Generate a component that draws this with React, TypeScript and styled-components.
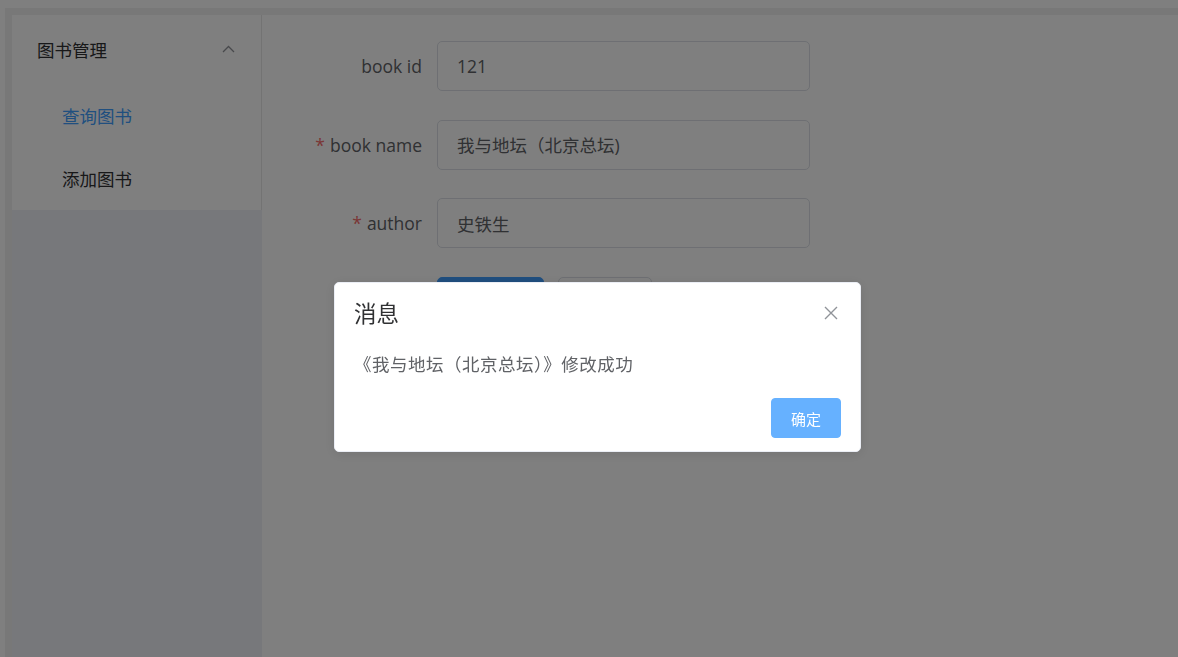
import styled, { createGlobalStyle } from "styled-components";

const GlobalStyle = createGlobalStyle`
  * {
    box-sizing: border-box;
  }

  html, body {
    margin: 0;
    padding: 0;
    background: #ffffff;
    font-family: "Open Sans", "Noto Sans CJK SC", sans-serif;
    overflow: hidden;
  }
`;

const Frame = styled.div`
  margin: 8px 0 0 5px;
  height: 649px;
  border-top: 7px solid #f0f0f0;
  border-left: 7px solid #f0f0f0;
  display: flex;
`;

const Aside = styled.aside`
  width: 250px;
  flex-shrink: 0;
  background: rgb(238, 241, 246);
`;

const Menu = styled.ul<{ $nested?: boolean }>`
  list-style: none;
  margin: 0;
  padding: 0;
  background: #ffffff;
  border-right: ${(p) => (p.$nested ? "none" : "1px solid #e6e6e6")};
`;

const SubTitle = styled.div`
  height: 69px;
  padding: 0 25px;
  display: flex;
  align-items: center;
  justify-content: space-between;
  font-size: 17.5px;
  color: #303133;
`;

const MenuItem = styled.li<{ $active?: boolean }>`
  height: 63px;
  padding-left: 50px;
  display: flex;
  align-items: center;
  font-size: 17.5px;
  color: ${(p) => (p.$active ? "#409eff" : "#303133")};
`;

const Main = styled.main`
  flex: 1;
  padding: 26px 25px;
`;

const FormItem = styled.div`
  display: flex;
  height: 50px;
  margin-bottom: 28.5px;
`;

const Label = styled.label`
  width: 150px;
  padding-right: 15px;
  text-align: right;
  line-height: 50px;
  font-size: 17.5px;
  color: #606266;
`;

const Star = styled.span`
  color: #f56c6c;
  margin-right: 5px;
`;

const Input = styled.div`
  width: 373px;
  height: 50px;
  border: 1px solid #dcdfe6;
  border-radius: 5px;
  padding: 0 19px;
  display: flex;
  align-items: center;
  font-size: 17.5px;
  color: #606266;
`;

const Actions = styled.div`
  display: flex;
  gap: 14px;
  padding-left: 150px;
  margin-top: 1px;
`;

const Button = styled.button<{ $primary?: boolean }>`
  height: 50px;
  padding: 0 23.5px;
  border-radius: 5px;
  font-family: inherit;
  font-size: 17.5px;
  border: 1px solid ${(p) => (p.$primary ? "#409eff" : "#dcdfe6")};
  background: ${(p) => (p.$primary ? "#409eff" : "#ffffff")};
  color: ${(p) => (p.$primary ? "#ffffff" : "#606266")};
`;

const Overlay = styled.div`
  position: fixed;
  inset: 0;
  background: rgba(0, 0, 0, 0.5);
  display: flex;
  align-items: flex-start;
`;

const Dialog = styled.div`
  position: relative;
  margin: 282px 0 0 334px;
  width: 527px;
  padding-bottom: 13px;
  background: #ffffff;
  border: 1px solid #ebeef5;
  border-radius: 5px;
  box-shadow: 0 2px 12px rgba(0, 0, 0, 0.1);
`;

const DialogHeader = styled.div`
  padding: 20px 19px 12.5px;
`;

const DialogTitle = styled.div`
  font-size: 22.5px;
  line-height: 1;
  color: #303133;
`;

const CloseButton = styled.div`
  position: absolute;
  top: 20px;
  right: 19px;
  width: 20px;
  height: 20px;
  display: flex;
  align-items: center;
  justify-content: center;
`;

const DialogContent = styled.div`
  padding: 10.5px 19px 12.5px;
  font-size: 17.5px;
  line-height: 30px;
  letter-spacing: 0.5px;
  color: #606266;
`;

const DialogButtons = styled.div`
  padding: 7px 19px 0;
  display: flex;
  justify-content: flex-end;
`;

const ConfirmButton = styled.button`
  height: 40px;
  width: 70px;
  border: 1px solid #66b1ff;
  border-radius: 4px;
  background: #66b1ff;
  color: #ffffff;
  font-family: inherit;
  font-size: 15px;
`;

function ArrowUp() {
  return (
    <svg width="15" height="15" viewBox="0 0 15 15" fill="none">
      <polyline
        points="2,10 7.5,4.5 13,10"
        stroke="#909399"
        strokeWidth="1.3"
      />
    </svg>
  );
}

function CloseIcon() {
  return (
    <svg width="16" height="16" viewBox="0 0 16 16" fill="none">
      <path d="M2 2 L14 14 M14 2 L2 14" stroke="#909399" strokeWidth="1.4" />
    </svg>
  );
}

export default function App() {
  return (
    <>
      <GlobalStyle />
      <Frame>
        <Aside>
          <Menu>
            <li>
              <SubTitle>
                <span>图书管理</span>
                <ArrowUp />
              </SubTitle>
              <Menu $nested>
                <MenuItem $active>查询图书</MenuItem>
                <MenuItem>添加图书</MenuItem>
              </Menu>
            </li>
          </Menu>
        </Aside>

        <Main>
          <FormItem>
            <Label>book id</Label>
            <Input>121</Input>
          </FormItem>
          <FormItem>
            <Label>
              <Star>*</Star>book name
            </Label>
            <Input>我与地坛（北京总坛)</Input>
          </FormItem>
          <FormItem>
            <Label>
              <Star>*</Star>author
            </Label>
            <Input>史铁生</Input>
          </FormItem>
          <Actions>
            <Button $primary>Submit</Button>
            <Button>Reset</Button>
          </Actions>
        </Main>
      </Frame>

      <Overlay>
        <Dialog>
          <DialogHeader>
            <DialogTitle>消息</DialogTitle>
          </DialogHeader>
          <CloseButton>
            <CloseIcon />
          </CloseButton>
          <DialogContent>《我与地坛（北京总坛）》修改成功</DialogContent>
          <DialogButtons>
            <ConfirmButton>确定</ConfirmButton>
          </DialogButtons>
        </Dialog>
      </Overlay>
    </>
  );
}
